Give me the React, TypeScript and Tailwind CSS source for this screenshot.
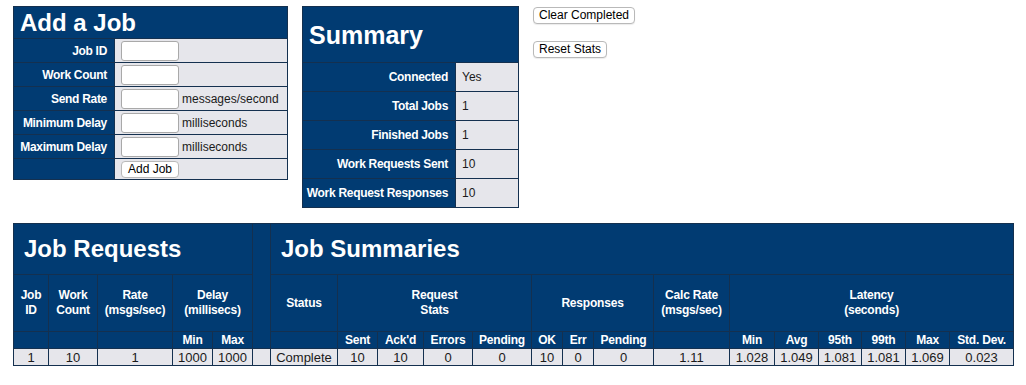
import React from "react";

const NAVY = "bg-[#013b72]";
const font = { fontFamily: '"Liberation Sans", Arial, sans-serif' };

function Btn({ children, w }: { children: React.ReactNode; w: string }) {
  return (
    <button
      className={`h-[17px] ${w} rounded-[4px] border border-[#b9b9b9] bg-white text-[12px] leading-[15px] text-black shadow-[0_1px_1px_rgba(0,0,0,0.08)]`}
      style={font}
    >
      {children}
    </button>
  );
}

function Input() {
  return (
    <input
      className="block h-[20px] w-[58px] rounded-[3px] border border-[#a9a9a9] bg-white"
    />
  );
}

const lab = "border border-[#14304f] text-right pr-[7px] text-[12px] font-bold text-white whitespace-nowrap tracking-[-0.3px]";
const val = "border border-[#14304f] bg-[#e6e6eb] text-[12px] text-[#1a1a1a]";

function AddJob() {
  const rows: [string, string][] = [
    ["Job ID", ""],
    ["Work Count", ""],
    ["Send Rate", "messages/second"],
    ["Minimum Delay", "milliseconds"],
    ["Maximum Delay", "milliseconds"],
  ];
  return (
    <table className={`border-collapse table-fixed w-[274px] ${NAVY}`}>
      <colgroup>
        <col className="w-[101px]" />
        <col className="w-[173px]" />
      </colgroup>
      <tbody>
        <tr className="h-[32px]">
          <td colSpan={2} className="border border-[#14304f] pl-[6px] text-[24px] font-bold leading-[26px] text-white align-middle">
            Add a Job
          </td>
        </tr>
        {rows.map(([l, u]) => (
          <tr key={l} className="h-[24px]">
            <td className={lab}>{l}</td>
            <td className={`${val} pl-[6px]`}>
              <div className="flex items-center gap-[3px]">
                <Input />
                {u && <span className="text-[12px] text-[#1a1a1a]">{u}</span>}
              </div>
            </td>
          </tr>
        ))}
        <tr className="h-[21px]">
          <td className="border border-[#14304f]"></td>
          <td className={`${val} pl-[6px]`}>
            <button className="block h-[17px] w-[58px] rounded-[4px] border border-[#b9b9b9] bg-white text-[12px] leading-[15px] text-black" style={font}>
              Add Job
            </button>
          </td>
        </tr>
      </tbody>
    </table>
  );
}

function Summary() {
  const rows: [string, string][] = [
    ["Connected", "Yes"],
    ["Total Jobs", "1"],
    ["Finished Jobs", "1"],
    ["Work Requests Sent", "10"],
    ["Work Request Responses", "10"],
  ];
  return (
    <table className={`border-collapse table-fixed w-[216px] ${NAVY}`}>
      <colgroup>
        <col className="w-[153px]" />
        <col className="w-[63px]" />
      </colgroup>
      <tbody>
        <tr className="h-[56px]">
          <td colSpan={2} className="border border-[#14304f] pl-[6px] text-[25px] font-bold leading-[28px] text-white align-middle">
            Summary
          </td>
        </tr>
        {rows.map(([l, v]) => (
          <tr key={l} className="h-[29px]">
            <td className={lab}>{l}</td>
            <td className={`${val} pl-[6px]`}>{v}</td>
          </tr>
        ))}
      </tbody>
    </table>
  );
}

const widths = [35, 49, 75, 40, 40, 18, 67, 40, 46, 49, 59, 31, 31, 60, 76, 45, 44, 43, 44, 44, 64];

const th = "border border-[#14304f] text-center text-[12px] font-bold leading-[15px] text-white align-middle p-0 tracking-[-0.2px]";
const td = "border border-[#14304f] bg-[#e6e6eb] text-center text-[13px] leading-[15px] text-[#1a1a1a] p-0";

function JobsTable() {
  const data = ["1", "10", "1", "1000", "1000", "", "Complete", "10", "10", "0", "0", "10", "0", "0", "1.11", "1.028", "1.049", "1.081", "1.081", "1.069", "0.023"];
  return (
    <table className={`border-collapse table-fixed w-[1000px] ${NAVY}`}>
      <colgroup>
        {widths.map((w, i) => (
          <col key={i} style={{ width: w }} />
        ))}
      </colgroup>
      <tbody>
        <tr className="h-[51px]">
          <td colSpan={5} className="border border-[#14304f] pl-[10px] text-[24px] font-bold text-white align-middle">
            Job Requests
          </td>
          <td rowSpan={3} className="border border-[#14304f]"></td>
          <td colSpan={15} className="border border-[#14304f] pl-[10px] text-[24px] font-bold text-white align-middle">
            Job Summaries
          </td>
        </tr>
        <tr className="h-[57px]">
          <td className={th}>Job<br />ID</td>
          <td className={th}>Work<br />Count</td>
          <td className={th}>Rate<br />(msgs/sec)</td>
          <td colSpan={2} className={th}>Delay<br />(millisecs)</td>
          <td className={th}>Status</td>
          <td colSpan={4} className={th}>Request<br />Stats</td>
          <td colSpan={3} className={th}>Responses</td>
          <td className={th}>Calc Rate<br />(msgs/sec)</td>
          <td colSpan={6} className={th}>Latency<br />(seconds)</td>
        </tr>
        <tr className="h-[17px]">
          <td className={th}></td>
          <td className={th}></td>
          <td className={th}></td>
          <td className={th}>Min</td>
          <td className={th}>Max</td>
          <td className={th}></td>
          <td className={th}>Sent</td>
          <td className={th}>Ack'd</td>
          <td className={th}>Errors</td>
          <td className={th}>Pending</td>
          <td className={th}>OK</td>
          <td className={th}>Err</td>
          <td className={th}>Pending</td>
          <td className={th}></td>
          <td className={th}>Min</td>
          <td className={th}>Avg</td>
          <td className={th}>95th</td>
          <td className={th}>99th</td>
          <td className={th}>Max</td>
          <td className={th}>Std. Dev.</td>
        </tr>
        <tr className="h-[17px]">
          {data.map((d, i) => (
            <td key={i} className={td}>{d}</td>
          ))}
        </tr>
      </tbody>
    </table>
  );
}

export default function App() {
  return (
    <div className="min-h-[385px] w-[1026px] bg-white pl-[13px] pt-[6px]" style={font}>
      <div className="flex items-start">
        <AddJob />
        <div className="ml-[14px]">
          <Summary />
        </div>
        <div className="ml-[14px] mt-[1px] flex flex-col items-start gap-[17px]">
          <Btn w="w-[102px]">Clear Completed</Btn>
          <Btn w="w-[74px]">Reset Stats</Btn>
        </div>
      </div>
      <div className="mt-[15px]">
        <JobsTable />
      </div>
    </div>
  );
}
